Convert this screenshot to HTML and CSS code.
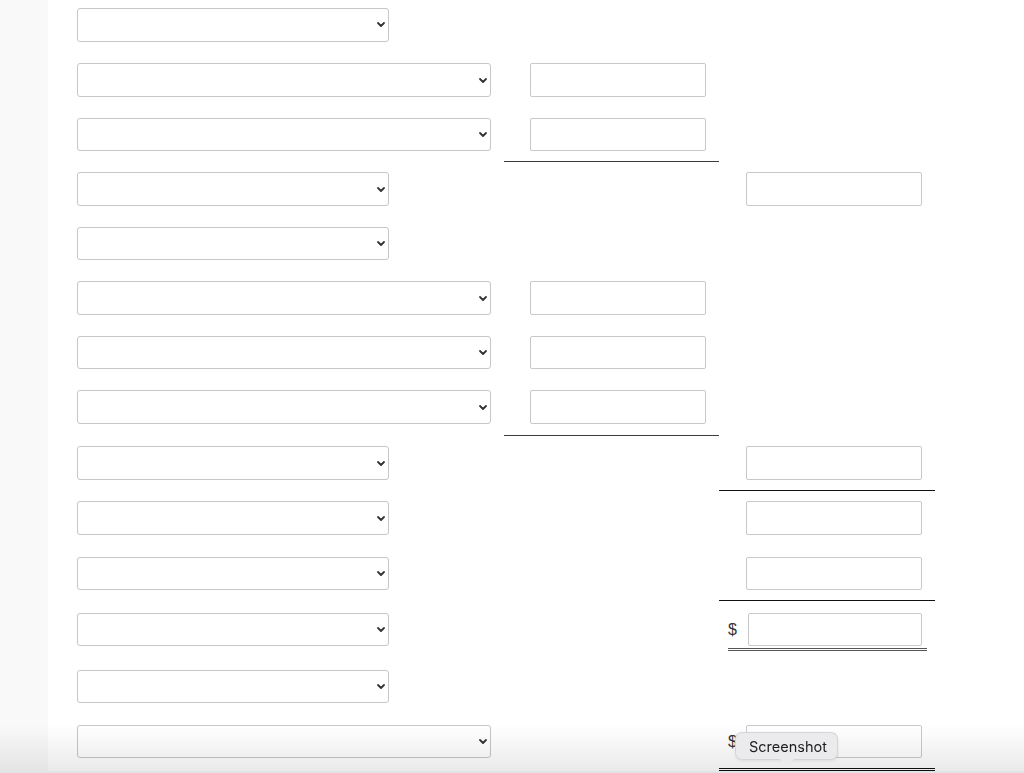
FILE: index.html
```html
<!DOCTYPE html>
<html lang="en">
<head>
<meta charset="utf-8">
<title>Statement</title>
<link rel="stylesheet" href="styles.css">
</head>
<body>
<div class="page">
  <div class="sheet">
    <div class="row first">
      <div class="cell c1"><span class="sel narrow"><select></select><svg class="chev" viewBox="0 0 8 5"><path d="M1 1L4 4L7 1"/></svg></span></div>
      <div class="cell c2"></div><div class="cell c3"></div>
    </div>
    <div class="row">
      <div class="cell c1"><span class="sel wide"><select></select><svg class="chev" viewBox="0 0 8 5"><path d="M1 1L4 4L7 1"/></svg></span></div>
      <div class="cell c2"><input class="amt" type="text"></div><div class="cell c3"></div>
    </div>
    <div class="row">
      <div class="cell c1"><span class="sel wide"><select></select><svg class="chev" viewBox="0 0 8 5"><path d="M1 1L4 4L7 1"/></svg></span></div>
      <div class="cell c2 line"><input class="amt" type="text"></div><div class="cell c3"></div>
    </div>
    <div class="row">
      <div class="cell c1"><span class="sel narrow"><select></select><svg class="chev" viewBox="0 0 8 5"><path d="M1 1L4 4L7 1"/></svg></span></div>
      <div class="cell c2"></div><div class="cell c3"><input class="amt" type="text"></div>
    </div>
    <div class="row">
      <div class="cell c1"><span class="sel narrow"><select></select><svg class="chev" viewBox="0 0 8 5"><path d="M1 1L4 4L7 1"/></svg></span></div>
      <div class="cell c2"></div><div class="cell c3"></div>
    </div>
    <div class="row">
      <div class="cell c1"><span class="sel wide"><select></select><svg class="chev" viewBox="0 0 8 5"><path d="M1 1L4 4L7 1"/></svg></span></div>
      <div class="cell c2"><input class="amt" type="text"></div><div class="cell c3"></div>
    </div>
    <div class="row">
      <div class="cell c1"><span class="sel wide"><select></select><svg class="chev" viewBox="0 0 8 5"><path d="M1 1L4 4L7 1"/></svg></span></div>
      <div class="cell c2"><input class="amt" type="text"></div><div class="cell c3"></div>
    </div>
    <div class="row h56">
      <div class="cell c1"><span class="sel wide"><select></select><svg class="chev" viewBox="0 0 8 5"><path d="M1 1L4 4L7 1"/></svg></span></div>
      <div class="cell c2 line"><input class="amt" type="text"></div><div class="cell c3"></div>
    </div>
    <div class="row h55">
      <div class="cell c1"><span class="sel narrow"><select></select><svg class="chev" viewBox="0 0 8 5"><path d="M1 1L4 4L7 1"/></svg></span></div>
      <div class="cell c2"></div><div class="cell c3 line dark"><input class="amt" type="text"></div>
    </div>
    <div class="row h555">
      <div class="cell c1"><span class="sel narrow"><select></select><svg class="chev" viewBox="0 0 8 5"><path d="M1 1L4 4L7 1"/></svg></span></div>
      <div class="cell c2"></div><div class="cell c3"><input class="amt" type="text"></div>
    </div>
    <div class="row">
      <div class="cell c1"><span class="sel narrow"><select></select><svg class="chev" viewBox="0 0 8 5"><path d="M1 1L4 4L7 1"/></svg></span></div>
      <div class="cell c2"></div><div class="cell c3 line dark"><input class="amt" type="text"></div>
    </div>
    <div class="row dollar-row">
      <div class="cell c1"><span class="sel narrow"><select></select><svg class="chev" viewBox="0 0 8 5"><path d="M1 1L4 4L7 1"/></svg></span></div>
      <div class="cell c2"></div>
      <div class="cell c3 money"><div class="money-box underlined"><span class="cur">$</span><input class="amt short" type="text"></div></div>
    </div>
    <div class="row h55">
      <div class="cell c1"><span class="sel narrow"><select></select><svg class="chev" viewBox="0 0 8 5"><path d="M1 1L4 4L7 1"/></svg></span></div>
      <div class="cell c2"></div><div class="cell c3"></div>
    </div>
    <div class="row total-row">
      <div class="cell c1"><span class="sel wide"><select></select><svg class="chev" viewBox="0 0 8 5"><path d="M1 1L4 4L7 1"/></svg></span></div>
      <div class="cell c2"></div>
      <div class="cell c3 money dbl"><div class="money-box"><span class="cur">$</span><input class="amt" type="text"></div></div>
    </div>
  </div>
</div>
<div class="fade"></div>
<div class="tip">Screenshot</div>
</body>
</html>
```

FILE: styles.css
```css
html, body {
  margin: 0;
  padding: 0;
  height: 100%;
  overflow: hidden;
}
body {
  background: #f9f9f9;
  font-family: "Liberation Sans", Arial, sans-serif;
  color: #333;
}
.page {
  margin-left: 48px;
  background: #fff;
  min-height: 100%;
}
.sheet {
  margin-top: -2.5px;
}
.row {
  display: grid;
  grid-template-columns: 456px 215px 216px 1fr;
  height: 54.5px;
  box-sizing: border-box;
}
.row.first { height: 55.3px; }
.row.h55 { height: 55px; }
.row.h555 { height: 55.5px; }
.row.h56 { height: 56px; }
.row.dollar-row { height: 58.5px; }
.row.total-row { height: 57px; }
.cell {
  box-sizing: border-box;
  padding-top: 10.5px;
}
.dollar-row .cell { padding-top: 12px; }
.c1 { padding-left: 29px; }
.c2 { padding-left: 26px; }
.c3 { padding-left: 27px; }
.line { border-bottom: 1px solid #3c3c3c; }
.line.dark { border-bottom-color: #111; }
.dbl { border-bottom: 3px double #111; }

.sel {
  position: relative;
  display: block;
  height: 33.5px;
}
.sel.narrow { width: 312px; }
.sel.wide { width: 414px; }
.sel select {
  -webkit-appearance: none;
  appearance: none;
  display: block;
  width: 100%;
  height: 100%;
  margin: 0;
  box-sizing: border-box;
  border: 1px solid #c6c6c6;
  border-radius: 3px;
  background: #fff;
  font: 14px "Liberation Sans", Arial, sans-serif;
}
.chev {
  position: absolute;
  right: 4px;
  top: 50%;
  width: 8px;
  height: 5px;
  margin-top: -2.5px;
  fill: none;
  stroke: #333;
  stroke-width: 1.8;
  stroke-linecap: round;
  stroke-linejoin: round;
  overflow: visible;
}
.amt {
  display: block;
  flex: none;
  width: 176px;
  height: 33.5px;
  margin: 0;
  padding: 0;
  box-sizing: border-box;
  border: 1px solid #c9c9c9;
  border-radius: 2px;
  background: #fff;
  font: 14px "Liberation Sans", Arial, sans-serif;
}
.amt.short { width: 174px; }
.money { padding-left: 9px; }
.money-box {
  display: flex;
  align-items: center;
}
.money-box .cur {
  flex: none;
  font-size: 16px;
  color: #333;
  width: 18px;
}
.underlined {
  width: 199px;
  padding-bottom: 1.5px;
  border-bottom: 3px double #555;
}
.underlined .cur { width: 20px; }
.fade {
  position: fixed;
  left: 0;
  right: 0;
  bottom: 0;
  height: 48px;
  background: linear-gradient(to bottom, rgba(0,0,0,0), rgba(0,0,0,0.085));
  pointer-events: none;
}
.tip {
  position: fixed;
  left: 735px;
  top: 732px;
  width: 103px;
  height: 28px;
  box-sizing: border-box;
  padding-left: 13px;
  font: 14.5px/27px Inter, "Noto Sans", sans-serif;
  color: #1d1d1f;
  background: #ebebed;
  border: 1px solid rgba(0,0,0,0.09);
  border-radius: 7px;
  box-shadow: 0 1px 3px rgba(0,0,0,0.08);
}
.tip::after {
  content: "";
  position: absolute;
  left: 44px;
  bottom: -7px;
  width: 0;
  height: 0;
  border-left: 7px solid transparent;
  border-right: 7px solid transparent;
  border-top: 7px solid #ebebed;
}
```
